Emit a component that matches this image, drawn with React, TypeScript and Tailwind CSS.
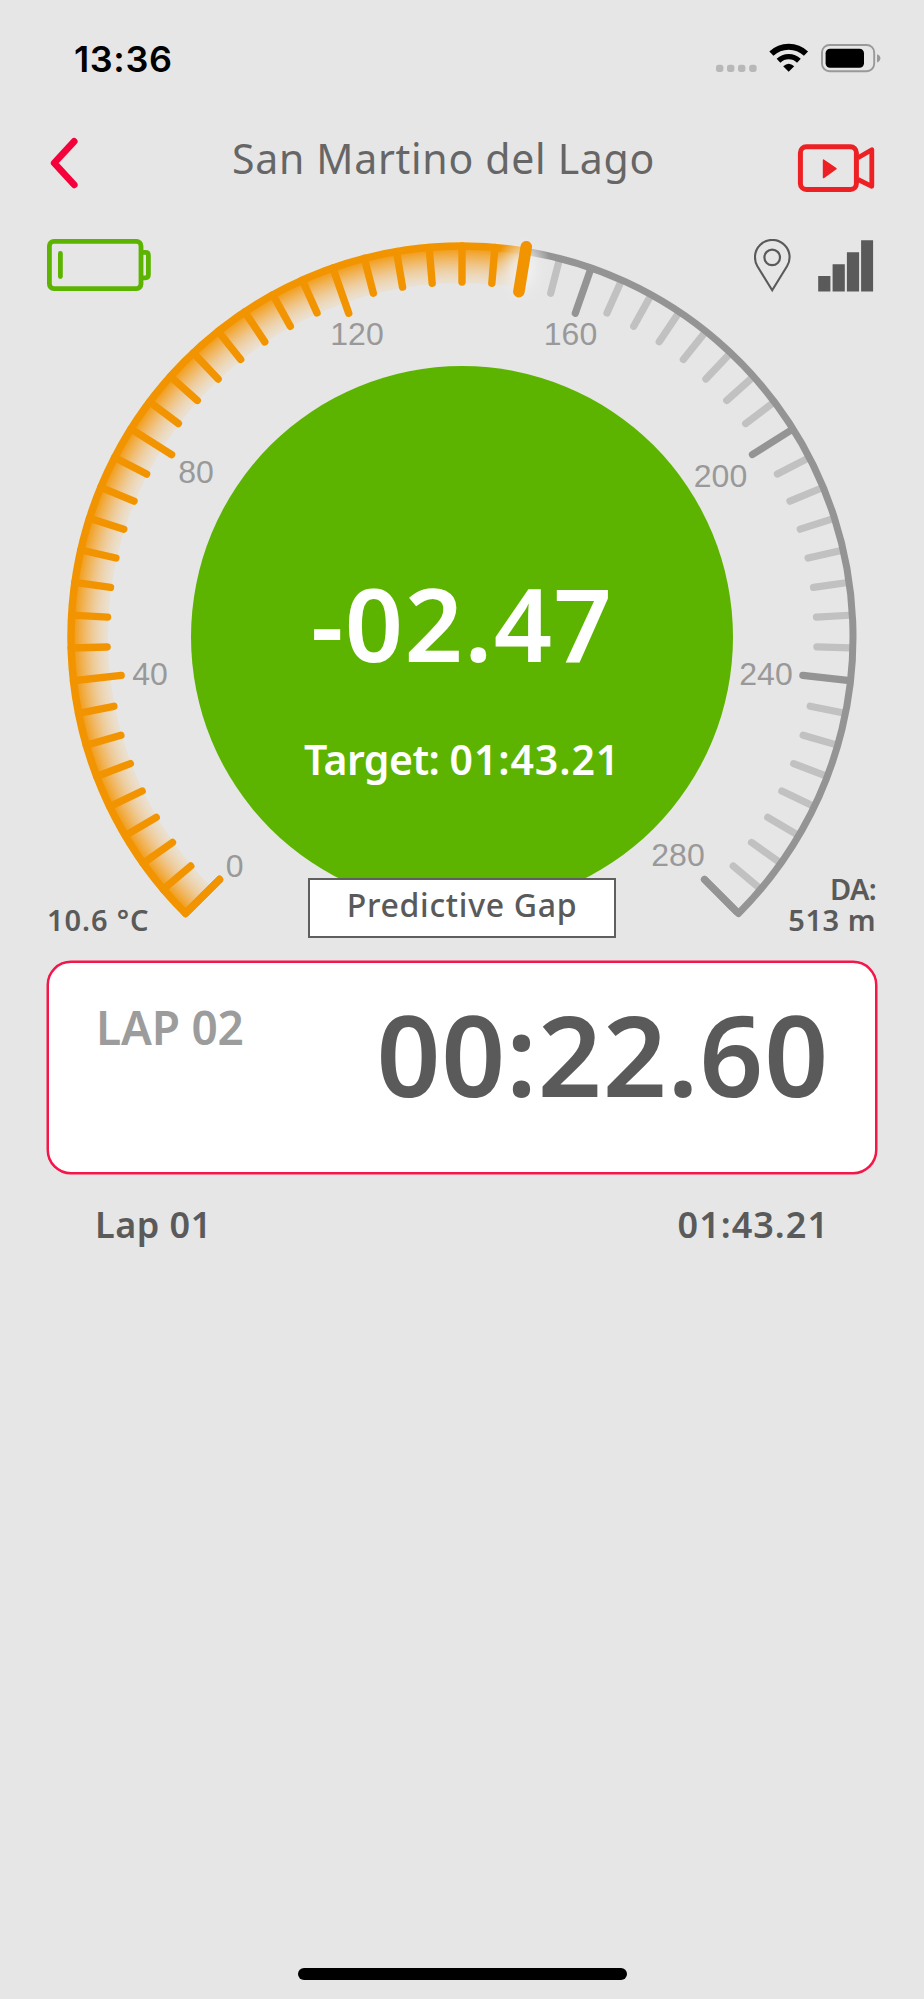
const CX = 462;
const CY = 637;
const R = 391;
const MAX = 280;
const SPEED = 149.7;
const STEP = 5;

const ORANGE = '#f29400';
const GREY = '#949494';

// speed -> degrees clockwise from 12 o'clock, the scale spans 270°
const toAngle = (v: number) => -135 + (v / MAX) * 270;

const polar = (r: number, deg: number): [number, number] => {
  const a = (deg * Math.PI) / 180;
  return [CX + r * Math.sin(a), CY - r * Math.cos(a)];
};

const arc = (r: number, from: number, to: number) => {
  const [x1, y1] = polar(r, from);
  const [x2, y2] = polar(r, to);
  return `M${x1} ${y1}A${r} ${r} 0 ${to - from > 180 ? 1 : 0} 1 ${x2} ${y2}`;
};

const LABELS = [
  { v: 0, x: 234.7, y: 877 },
  { v: 40, x: 150, y: 685 },
  { v: 80, x: 196, y: 483 },
  { v: 120, x: 357, y: 345 },
  { v: 160, x: 570.5, y: 345 },
  { v: 200, x: 720.5, y: 487 },
  { v: 240, x: 766, y: 684.5 },
  { v: 280, x: 678, y: 866 },
];

const LAPS = [{ name: 'Lap 01', time: '01:43.21' }];

function StatusBar() {
  return (
    <div className="flex h-[118px] items-start justify-between pl-[74px] pr-[43px] pt-[41px]">
      <span className="font-['Inter',sans-serif] text-[36px] font-semibold leading-none tracking-[0.6px] text-black">13:36</span>
      <svg width="166" height="34" viewBox="715 41 166 34" fill="none">
        {[716, 727, 738, 749.2].map(x => (
          <rect key={x} x={x} y="64.7" width="7.4" height="7.2" rx="2.6" fill="#b8b8b8" />
        ))}
        <path d="M771.4 53.6A25 25 0 0 1 806 53.6" stroke="#000" strokeWidth="6" />
        <path d="M778.5 60.7A14.8 14.8 0 0 1 798.9 60.7" stroke="#000" strokeWidth="5.4" />
        <path d="M783.2 66.2Q788.7 61.2 794.2 66.2L788.7 71.8Z" fill="#000" />
        <rect x="822" y="45" width="52.2" height="26.2" rx="7.5" stroke="#999" strokeWidth="1.9" />
        <rect x="825.6" y="48.8" width="38.4" height="19" rx="4.5" fill="#000" />
        <path d="M877 54.2Q880.4 55.4 880.4 58.3Q880.4 61.2 877 62.4Z" fill="#999" />
      </svg>
    </div>
  );
}

function Header() {
  return (
    <div className="flex h-[102px] items-start justify-between pl-[48px] pr-[48px]">
      <svg width="32" height="54" viewBox="48 136 32 54" fill="none" className="mt-[18px]">
        <path d="M74.2 141.4L54.2 163L74.2 184.8" stroke="#f4003a" strokeWidth="6.8" strokeLinecap="round" strokeLinejoin="round" />
      </svg>
      <h1 className="mt-[20px] pl-[11px] text-[41px] font-normal leading-none tracking-[0.7px] text-[#666]">San Martino del Lago</h1>
      <svg width="80" height="52" viewBox="796 142 80 52" fill="none" className="mt-[24px]">
        <rect x="800.4" y="146.7" width="56" height="42.8" rx="6" stroke="#ed2024" strokeWidth="5" />
        <path d="M858 157.8L871.8 149.7V186.3L858 179.5" stroke="#ed2024" strokeWidth="4.8" strokeLinejoin="round" />
        <path d="M823.5 160L836 168.6L823.5 177.6Z" fill="#ed2024" stroke="#ed2024" strokeWidth="1.4" strokeLinejoin="round" />
      </svg>
    </div>
  );
}

function Gauge() {
  const needle = toAngle(SPEED);
  const ticks = Array.from({ length: MAX / STEP + 1 }, (_, i) => i * STEP);
  const [nx1, ny1] = polar(395.5, needle);
  const [nx2, ny2] = polar(350, needle);
  const [ex, ey] = polar(354, needle);
  const [sx, sy] = polar(354, -135);
  const [gx, gy] = polar(372, needle);

  return (
    <svg width="924" height="740" viewBox="0 220 924 740" fill="none" className="[grid-area:1/1]">
      <defs>
        <radialGradient id="shade" gradientUnits="userSpaceOnUse" cx={CX} cy={CY} r={R}>
          <stop offset="0.9" stopColor="#ffca7a" stopOpacity="0.12" />
          <stop offset="0.945" stopColor="#f9a42c" stopOpacity="0.42" />
          <stop offset="1" stopColor={ORANGE} stopOpacity="1" />
        </radialGradient>
        <radialGradient id="glow">
          <stop offset="0" stopColor="#f4f4f4" stopOpacity="0.95" />
          <stop offset="0.4" stopColor="#efefef" stopOpacity="0.75" />
          <stop offset="1" stopColor="#e6e6e6" stopOpacity="0" />
        </radialGradient>
      </defs>

      <circle cx={CX} cy={CY} r="271" fill="#5cb400" />

      {ticks.filter(v => v > SPEED).map(v => {
        const major = v % 40 === 0;
        const [x1, y1] = polar(R - 3, toAngle(v));
        const [x2, y2] = polar(major ? 343 : 355, toAngle(v));
        return <line key={v} x1={x1} y1={y1} x2={x2} y2={y2} stroke={major ? GREY : '#c1c1c1'} strokeWidth="7.2" strokeLinecap="round" />;
      })}
      <path d={`${arc(R, needle, 135)}L${polar(343, 135).join(' ')}`} stroke={GREY} strokeWidth="7" strokeLinecap="round" strokeLinejoin="round" />

      <path d={`${arc(R, -135, needle)}L${ex} ${ey}A354 354 0 0 0 ${sx} ${sy}Z`} fill="url(#shade)" />
      <path d={`M${polar(343, -135).join(' ')}L${arc(R, -135, needle).slice(1)}`} stroke={ORANGE} strokeWidth="7.4" strokeLinecap="round" strokeLinejoin="round" />
      <ellipse cx={gx} cy={gy} rx="28" ry="38" transform={`rotate(${needle} ${gx} ${gy})`} fill="url(#glow)" />
      {ticks.filter(v => v < SPEED).map(v => {
        const [x1, y1] = polar(R, toAngle(v));
        const [x2, y2] = polar(v % 40 === 0 ? 343 : 355, toAngle(v));
        return <line key={v} x1={x1} y1={y1} x2={x2} y2={y2} stroke={ORANGE} strokeWidth="7.4" strokeLinecap="round" />;
      })}
      <line x1={nx1} y1={ny1} x2={nx2} y2={ny2} stroke={ORANGE} strokeWidth="11.6" strokeLinecap="round" />

      {LABELS.map(l => (
        <text key={l.v} x={l.x} y={l.y} textAnchor="middle" fill="#999" className="font-['Liberation_Sans',sans-serif] text-[32px]">{l.v}</text>
      ))}
    </svg>
  );
}

function GaugeIcons() {
  return (
    <div className="flex items-start justify-between">
      <svg width="104" height="52" viewBox="48 239 104 52" fill="none" stroke="#5cb400" strokeWidth="4.8">
        <rect x="50.4" y="241.4" width="91.6" height="47.2" rx="4.5" />
        <path d="M144 252.4H146.5Q149.4 252.4 149.4 255.4V274.6Q149.4 277.8 146.5 277.8H144" />
        <path d="M61.4 253.4V276.6" strokeLinecap="round" />
      </svg>
      <svg width="120" height="54" viewBox="754 239 120 54" fill="none">
        <path d="M772.2 290.2L757.4 266.3C755.6 263.4 755 260.4 755 257.2A17.3 17.3 0 0 1 789.6 257.2C789.6 260.4 788.8 263.4 787 266.3Z" stroke="#5a5a5a" strokeWidth="2.1" />
        <circle cx="772.2" cy="257.4" r="7.8" stroke="#5a5a5a" strokeWidth="2.2" />
        <path d="M818.2 276h12.2v15.5h-12.2zM832.6 264.2h12.2v27.3h-12.2zM846.9 252.2h12.2v39.3h-12.2zM861.1 240.3h12v51.2h-12z" fill="#5a5a5a" />
      </svg>
    </div>
  );
}

export default function App() {
  return (
    <div className="flex h-[1999px] w-[924px] flex-col overflow-hidden bg-[#e6e6e6] font-['Noto_Sans',sans-serif] text-[#5a5a5a]">
      <StatusBar />
      <Header />

      <section className="grid h-[740px] grid-cols-1 grid-rows-1">
        <Gauge />

        <div className="z-10 flex flex-col justify-between pb-[25px] pl-[47px] pr-[50px] pt-[19px] [grid-area:1/1]">
          <GaugeIcons />
          <div className="flex items-end justify-between text-[29px] font-semibold leading-[31px]">
            <span className="tracking-[0.9px]">10.6 °C</span>
            <div className="-mr-[2px] flex flex-col items-end">
              <span className="tracking-[-0.7px]">DA:</span>
              <span className="tracking-[0.5px]">513 m</span>
            </div>
          </div>
        </div>

        <div className="z-10 flex flex-col items-center pt-[352px] [grid-area:1/1]">
          <div className="text-[102px] font-semibold leading-none tracking-[1.4px] text-white">-02.47</div>
          <div className="mt-[65px] text-[41px] font-semibold leading-none text-white">
            <span className="tracking-[-0.5px]">Target: </span>
            <span className="tracking-[0.9px]">01:43.21</span>
          </div>
          <div className="mt-[98px] flex h-[60px] w-[308px] items-start justify-center border-2 border-[#5f5f5f] bg-white pt-[9px] text-[32px] font-medium leading-none tracking-[0.7px]">
            Predictive Gap
          </div>
        </div>
      </section>

      <section className="mx-[47px] mt-[1px] flex h-[213px] items-start justify-between rounded-[24px] border-2 border-[#f4174a] bg-white pl-[47px] pr-[46px] shadow-[0_0_0_0.5px_#f4174a]">
        <span className="mt-[41px] text-[46px] font-semibold leading-none tracking-[-0.2px] text-[#9c9c9c]">LAP 02</span>
        <span className="mt-[35px] text-[112px] font-semibold leading-none tracking-[0.8px]">00:22.60</span>
      </section>

      <ul className="mt-[33px] flex flex-col pl-[95px] pr-[95px] text-[36px] font-semibold leading-none">
        {LAPS.map(lap => (
          <li key={lap.name} className="flex justify-between">
            <span className="tracking-[0.5px]">{lap.name}</span>
            <span className="tracking-[1px]">{lap.time}</span>
          </li>
        ))}
      </ul>

      <div className="mb-[19px] ml-[298px] mt-auto h-[12px] w-[329px] rounded-full bg-black" />
    </div>
  );
}
